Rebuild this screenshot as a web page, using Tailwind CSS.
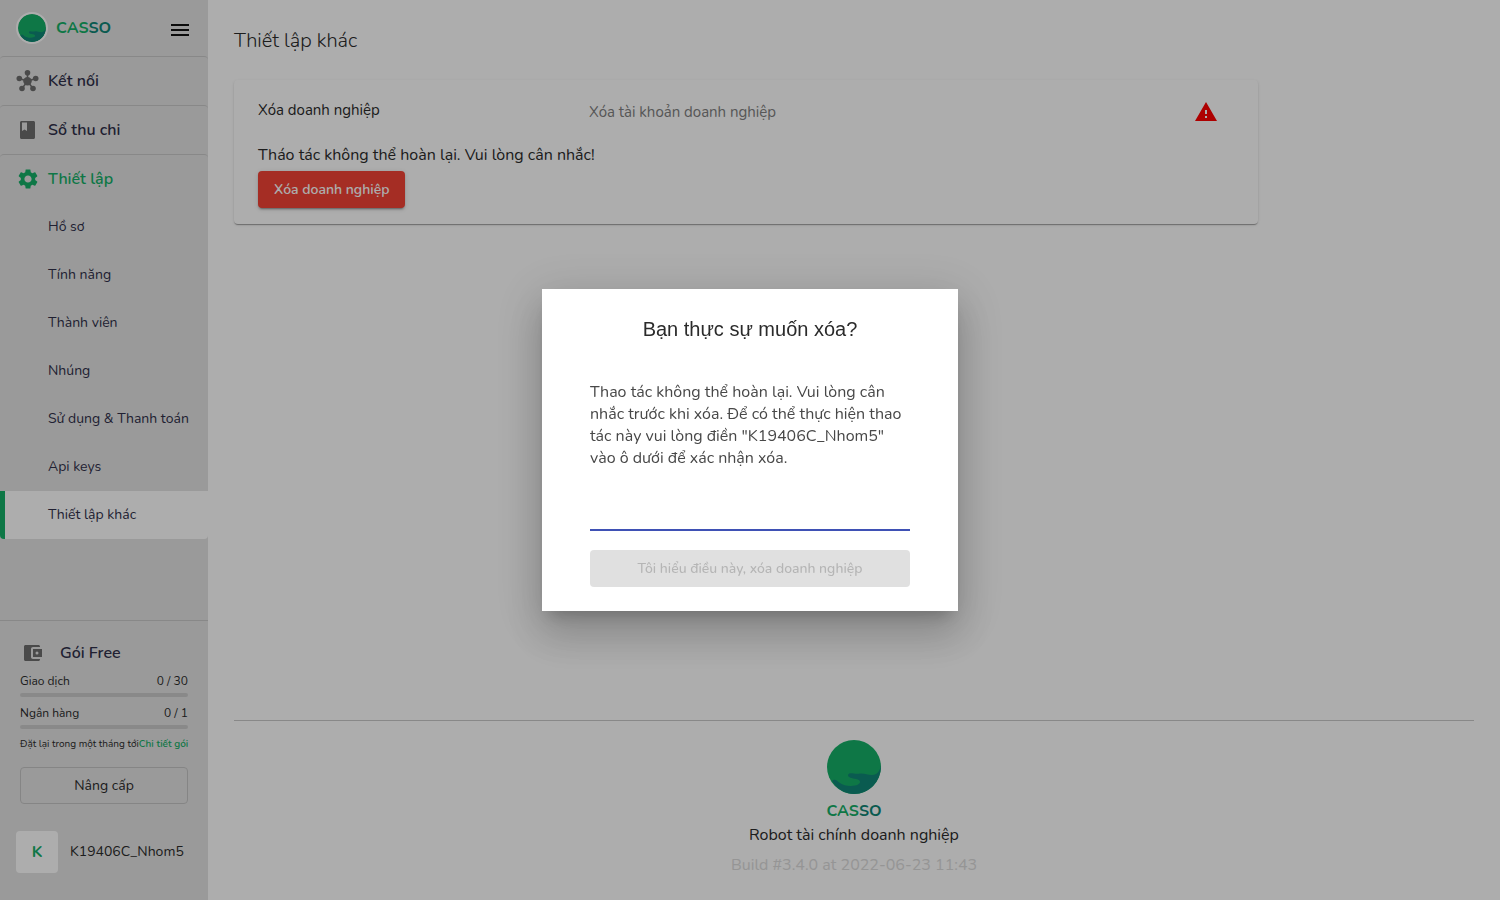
<!DOCTYPE html>
<html lang="vi">
<head>
<meta charset="utf-8">
<meta name="viewport" content="width=device-width, initial-scale=1">
<title>Casso - Thiết lập khác</title>
<script src="https://cdn.jsdelivr.net/npm/@tailwindcss/browser@4"></script>
</head>
<body class="bg-white font-['Nunito','Lato','Noto_Sans',sans-serif] text-[#2b2b2b]">
<svg class="hidden" aria-hidden="true">
  <symbol id="casso" viewBox="0 0 54 54">
    <circle cx="27" cy="27" r="27" fill="#16b068"/>
    <path d="M54 25C53 31 50 35 45 35C40 35 38 33 33 33.500C28 35 22 31 21 35C21 38 25 38 29 39C34 40 34 43 31 44.500C26 47 17 46 13 43C10 41 8 38 5 41C10 49 18 54 27 54C42 54 54 42 54 25Z" fill="#108676"/>
  </symbol>
</svg>

<div class="flex min-h-screen">
  <aside class="flex w-52 shrink-0 flex-col bg-[#e4e4e4]">
    <div class="flex h-14 items-center pl-4 pr-4">
      <a href="#" class="flex items-center gap-2 font-bold">
        <svg class="size-8 rounded-full border-2 border-white" aria-hidden="true"><use href="#casso"/></svg>
        <span class="text-[#16b068]">CAS<span class="text-[#108676]">SO</span></span>
      </a>
      <button type="button" aria-label="Menu" class="ml-auto pt-1">
        <svg class="size-6" viewBox="0 0 24 24" fill="#111" aria-hidden="true"><path d="M3 18h18v-2H3v2zm0-5h18v-2H3v2zm0-7v2h18V6H3z"/></svg>
      </button>
    </div>
    <nav class="text-[#30304a]">
      <a href="#" class="flex h-[49px] items-center gap-2 rounded border-t border-[#c9c9c9] pl-4 font-[650]">
        <svg class="size-6 text-[#6e6e6e]" viewBox="0 0 24 24" fill="currentColor" stroke="currentColor" aria-hidden="true"><g stroke="none"><circle cx="11.500" cy="12.300" r="4.200"/><circle cx="11.500" cy="3.800" r="2.800"/><circle cx="3.300" cy="9.500" r="2.800"/><circle cx="19.700" cy="9.500" r="2.800"/><circle cx="6" cy="19.500" r="2.800"/><circle cx="17" cy="19.500" r="2.800"/></g><path fill="none" stroke-width="1.500" d="M11.500 12V4M11.500 12.300L3.300 9.500M11.500 12.300L19.700 9.500M11.500 12.300L6 19.500M11.500 12.300L17 19.500"/></svg>
        Kết nối
      </a>
      <a href="#" class="flex h-[49px] items-center gap-2 rounded border-t border-[#c9c9c9] pl-4 font-[650]">
        <svg class="size-6" viewBox="0 0 24 24" fill="#6e6e6e" aria-hidden="true"><path d="M17.500 3h-12C4.700 3 4 3.700 4 4.500v15c0 .8.700 1.500 1.500 1.500h12c.8 0 1.500-.7 1.500-1.500v-15c0-.8-.7-1.500-1.500-1.500zM6 4.500h5V13l-2.500-1.500L6 13z"/></svg>
        Sổ thu chi
      </a>
      <a href="#" class="flex h-[49px] items-center gap-2 rounded border-t border-[#c9c9c9] pl-4 font-[650] text-[#16b068]">
        <svg class="size-6" viewBox="0 0 24 24" fill="#16b068" aria-hidden="true"><path d="M19.140 12.940c.04-.3.060-.61.060-.94 0-.32-.02-.64-.07-.94l2.030-1.580c.18-.14.230-.41.120-.61l-1.920-3.320c-.12-.22-.37-.29-.59-.22l-2.390.96c-.5-.38-1.030-.7-1.620-.94l-.36-2.540c-.04-.24-.24-.41-.48-.41h-3.840c-.24 0-.43.17-.47.41l-.36 2.540c-.59.24-1.130.57-1.620.94l-2.390-.96c-.22-.08-.47 0-.59.22L2.740 8.870c-.12.21-.08.47.12.61l2.030 1.580c-.05.3-.09.63-.09.94s.02.640.07.94l-2.030 1.580c-.18.14-.23.41-.12.61l1.920 3.320c.12.22.37.29.59.22l2.390-.96c.5.38 1.030.7 1.620.94l.36 2.540c.05.24.24.41.48.41h3.840c.24 0 .44-.17.47-.41l.36-2.540c.59-.24 1.130-.56 1.620-.94l2.390.96c.22.08.47 0 .59-.22l1.920-3.320c.12-.22.07-.47-.12-.61l-2.010-1.580zM12 15.600c-1.980 0-3.600-1.620-3.600-3.600s1.620-3.600 3.600-3.600 3.600 1.620 3.600 3.600-1.620 3.600-3.600 3.600z"/></svg>
        Thiết lập
      </a>
      <div class="text-sm">
        <a href="#" class="flex h-12 items-center pl-12">Hồ sơ</a>
        <a href="#" class="flex h-12 items-center pl-12">Tính năng</a>
        <a href="#" class="flex h-12 items-center pl-12">Thành viên</a>
        <a href="#" class="flex h-12 items-center pl-12">Nhúng</a>
        <a href="#" class="flex h-12 items-center pl-12">Sử dụng &amp; Thanh toán</a>
        <a href="#" class="flex h-12 items-center pl-12">Api keys</a>
        <a href="#" aria-current="page" class="flex h-12 items-center rounded-b border-l-[5px] border-[#16b068] bg-white pl-[43px]">Thiết lập khác</a>
      </div>
    </nav>

    <div class="mt-auto border-t border-[#c9c9c9] px-5 pt-5 pb-[27px]">
      <div class="flex h-6 items-center gap-4 font-[650] text-[#30304a]">
        <svg class="size-6" viewBox="-2 0 24 24" fill="#6e6e6e" aria-hidden="true"><path fill-rule="evenodd" d="M18 18v.500c0 .8-.7 1.500-1.500 1.500h-13C2.700 20 2 19.300 2 18.500v-13C2 4.700 2.700 4 3.500 4h13c.8 0 1.500.7 1.500 1.500V6h-7c-1.100 0-2 .9-2 2v8c0 1.100.9 2 2 2zm-7-2h9V8h-9zm4-5.500a1.500 1.500 0 1 1 0 3 1.500 1.500 0 0 1 0-3z"/></svg>
        <span>Gói Free</span>
      </div>
      <div class="mt-1 flex h-6 items-center justify-between text-xs"><span>Giao dịch</span><span>0 / 30</span></div>
      <div class="h-1 rounded-full bg-[#cacaca]"></div>
      <div class="mt-1 flex h-6 items-center justify-between text-xs"><span>Ngân hàng</span><span>0 / 1</span></div>
      <div class="h-1 rounded-full bg-[#cacaca]"></div>
      <div class="mt-1 flex h-[22px] items-center justify-between whitespace-nowrap text-[10px]"><span>Đặt lại trong một tháng tới</span><a href="#" class="font-[650] text-[#16b068]">Chi tiết gói</a></div>
      <button type="button" class="mt-3 h-[37px] w-full rounded border border-[#c4c4c4] text-sm">Nâng cấp</button>
      <a href="#" class="mt-[27px] -ml-1 flex items-center gap-3 text-sm">
        <span class="grid size-[42px] place-items-center rounded bg-white text-base font-bold text-[#16b068]">K</span>
        K19406C_Nhom5
      </a>
    </div>
  </aside>

  <main class="flex min-w-0 flex-1 flex-col px-[26px]">
    <h1 class="mt-[25px] h-8 text-xl leading-8 font-light">Thiết lập khác</h1>
    <section class="mt-[23px] max-w-5xl rounded px-6 pt-5 pb-4 shadow-[0_2px_1px_-1px_rgba(0,0,0,.2),0_1px_1px_0_rgba(0,0,0,.14),0_1px_3px_0_rgba(0,0,0,.12)]">
      <div class="flex h-6 items-center text-[15px]">
        <h2 class="w-[331px] pb-1">Xóa doanh nghiệp</h2>
        <p class="text-[#808080]">Xóa tài khoản doanh nghiệp</p>
        <svg class="mr-4 ml-auto size-6" viewBox="0 0 24 24" fill="#f00" aria-hidden="true"><path d="M1 21h22L12 2 1 21zm12-3h-2v-2h2v2zm0-4h-2v-4h2v4z"/></svg>
      </div>
      <p class="mt-[19px] h-6 leading-6">Tháo tác không thể hoàn lại. Vui lòng cân nhắc!</p>
      <button type="button" class="mt-1 h-[37px] rounded bg-[#f44336] px-4 text-sm font-[650] text-white shadow-[0_3px_1px_-2px_rgba(0,0,0,.2),0_2px_2px_0_rgba(0,0,0,.14),0_1px_5px_0_rgba(0,0,0,.12)]">Xóa doanh nghiệp</button>
    </section>
    <footer class="mt-auto flex flex-col items-center border-t border-[#c9c9c9] pt-[19px] pb-[23px]">
      <svg class="size-[54px]" aria-hidden="true"><use href="#casso"/></svg>
      <p class="mt-[5px] h-6 text-base leading-6 font-bold text-[#16b068]">CAS<span class="text-[#108676]">SO</span></p>
      <p class="h-6 leading-6">Robot tài chính doanh nghiệp</p>
      <p class="mt-1.5 h-6 leading-6 text-[#dcdcdc]">Build #3.4.0 at 2022-06-23 11:43</p>
    </footer>
  </main>
</div>

<div class="fixed inset-0 flex items-center justify-center bg-black/32">
  <div role="dialog" aria-modal="true" aria-labelledby="dlg-title" class="w-[416px] bg-white px-12 pt-6 pb-6 shadow-[0_11px_15px_-7px_rgba(0,0,0,.2),0_24px_38px_3px_rgba(0,0,0,.14),0_9px_46px_8px_rgba(0,0,0,.12)]">
    <h2 id="dlg-title" class="text-center font-['Liberation_Sans',sans-serif] text-xl leading-8">Bạn thực sự muốn xóa?</h2>
    <label for="confirm" class="mt-9 block text-base leading-[22px] text-[#484848]">Thao tác không thể hoàn lại. Vui lòng cân nhắc trước khi xóa. Để có thể thực hiện thao tác này vui lòng điền "K19406C_Nhom5" vào ô dưới để xác nhận xóa.</label>
    <input id="confirm" type="text" class="mt-[30px] block h-8 w-full border-b-2 border-[#3f51b5] outline-none">
    <button type="button" disabled class="mt-[19px] block h-[37px] w-full rounded bg-[#e0e0e0] text-sm font-medium text-[#b5b5b5]">Tôi hiểu điều này, xóa doanh nghiệp</button>
  </div>
</div>
</body>
</html>
